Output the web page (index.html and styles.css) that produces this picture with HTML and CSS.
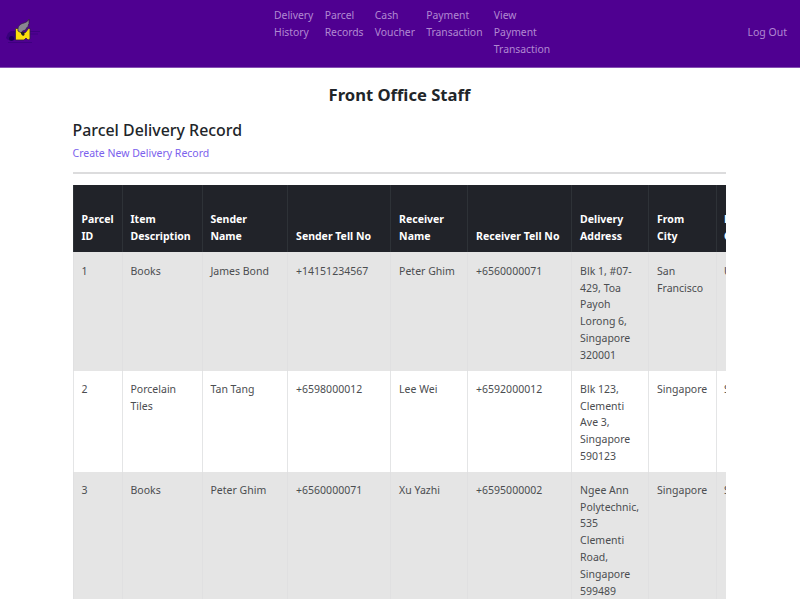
FILE: index.html
```html
<!DOCTYPE html>
<html lang="en">
<head>
<meta charset="utf-8">
<title>Parcel Delivery Record</title>
<link rel="stylesheet" href="styles.css">
</head>
<body>
<header class="navbar">
  <a class="brand" href="#" aria-label="Home">
    <svg width="44" height="32" viewBox="0 0 44 32">
      <path d="M8 15l3-2h5v9H8l-2-2z" fill="#37007c"/>
      <path d="M8 24.500h24M29 13.500h11M30 16h8" stroke="#3e0080" stroke-width="1"/>
      <circle cx="11.500" cy="20.500" r="2.500" fill="#1c0057"/>
      <path d="M15.500 10.500h2l4 4h4l3-4h1.500v10.500l-2 1-2-2-2 2h-8.500z" fill="#fbe00c" stroke="#34204b" stroke-width=".8"/>
      <path d="M18 13c-.5-5 2-7 6-8 3-1 4-2 5-4v5l-1 1 .5 1-2 2-1 2-3 1-1 2z" fill="#8a8691" stroke="#30223a" stroke-width=".7"/>
      <path d="M21 14h3.500v3l-1.500 1-2-2z" fill="#252022"/>
    </svg>
  </a>
  <nav class="links">
    <a href="#">Delivery<br>History</a>
    <a href="#">Parcel<br>Records</a>
    <a href="#">Cash<br>Voucher</a>
    <a href="#">Payment<br>Transaction</a>
    <a href="#">View<br>Payment<br>Transaction</a>
  </nav>
  <a class="logout" href="#">Log Out</a>
</header>
<main class="container">
  <h1>Front Office Staff</h1>
  <h2>Parcel Delivery Record</h2>
  <a class="create" href="#">Create New Delivery Record</a>
  <hr>
  <div class="table-wrap">
    <table>
      <colgroup><col class="c-id"><col class="c-item"><col class="c-sender"><col class="c-stel"><col class="c-receiver"><col class="c-rtel"><col class="c-address"><col class="c-from"><col class="c-to"></colgroup>
      <thead>
        <tr><th>Parcel<br>ID</th><th>Item<br>Description</th><th>Sender<br>Name</th><th>Sender Tell No</th><th>Receiver<br>Name</th><th>Receiver Tell No</th><th>Delivery<br>Address</th><th>From<br>City</th><th>From<br>Country</th></tr>
      </thead>
      <tbody>
        <tr class="r1"><td>1</td><td>Books</td><td>James Bond</td><td>+14151234567</td><td>Peter Ghim</td><td>+6560000071</td><td>Blk 1, #07-<br>429, Toa<br>Payoh<br>Lorong 6,<br>Singapore<br>320001</td><td>San<br>Francisco</td><td>USA</td></tr>
        <tr class="r2"><td>2</td><td>Porcelain<br>Tiles</td><td>Tan Tang</td><td>+6598000012</td><td>Lee Wei</td><td>+6592000012</td><td>Blk 123,<br>Clementi<br>Ave 3,<br>Singapore<br>590123</td><td>Singapore</td><td>Singapore</td></tr>
        <tr class="r3"><td>3</td><td>Books</td><td>Peter Ghim</td><td>+6560000071</td><td>Xu Yazhi</td><td>+6595000002</td><td>Ngee Ann<br>Polytechnic,<br>535<br>Clementi<br>Road,<br>Singapore<br>599489</td><td>Singapore</td><td>Singapore</td></tr>
      </tbody>
    </table>
  </div>
</main>
</body>
</html>
```
FILE: styles.css
```css
* { box-sizing: border-box; }
html, body { height: 100%; }
body {
  margin: 0;
  overflow: hidden;
  background: #fff;
  color: #212529;
  font-family: "Noto Sans", "Open Sans", sans-serif;
  font-size: 10.5px;
  line-height: 16.8px;
}
a { text-decoration: none; }
.navbar {
  display: grid;
  grid-template-columns: 274px 1fr auto;
  height: 68px;
  padding-right: 13px;
  background: #4f0091;
  border-bottom: 1px solid #8650b3;
}
.navbar a { color: #b188d2; }
.brand { align-self: center; height: 32px; }
.brand svg { display: block; }
.links { display: flex; gap: 11.3px; padding-top: 7px; font-size: 10.35px; }
.logout { align-self: center; padding-bottom: 2px; }
.container { width: 653.9px; margin: 0 0 0 72.5px; }
h1 {
  margin: 16px 0 0;
  text-align: center;
  font-size: 16.6px;
  font-weight: 700;
  line-height: 21px;
}
h2 {
  margin: 15px 0 0;
  font-size: 15.9px;
  font-weight: 500;
  line-height: 20px;
}
.create { display: block; margin-top: 5px; color: #7b61ed; }
hr { height: 2px; margin: 10px 0 11px; border: 0; background: #dcdcdd; }
.table-wrap { overflow: hidden; }
table {
  width: 739px;
  table-layout: fixed;
  border-collapse: separate;
  border-spacing: 0;
}
.c-id { width: 49px; }
.c-item { width: 80px; }
.c-sender { width: 85px; }
.c-stel { width: 103px; }
.c-receiver { width: 77px; }
.c-rtel { width: 104px; }
.c-address { width: 77px; }
.c-from { width: 68px; }
.c-to { width: 96px; }
th, td { padding: 8px; text-align: left; white-space: nowrap; border-left: 1px solid #e4e5e6; }
th:nth-child(n+4), td:nth-child(n+4) { padding-left: 8.6px; }
th:last-child, td:last-child { padding-left: 7.6px; }
th {
  height: 67.5px;
  vertical-align: bottom;
  background: #212329;
  border-color: #2e3237;
  color: #fff;
  font-weight: 700;
}
td { padding-top: 10px; padding-bottom: 0; vertical-align: top; color: #4b4d50; }
.r1 td { height: 118.5px; padding-top: 10.6px; }
.r2 td { height: 101px; }
.r3 td { height: 136px; }
.r1 td, .r3 td { background: #e5e5e5; border-color: #e0e0e1; }
```
